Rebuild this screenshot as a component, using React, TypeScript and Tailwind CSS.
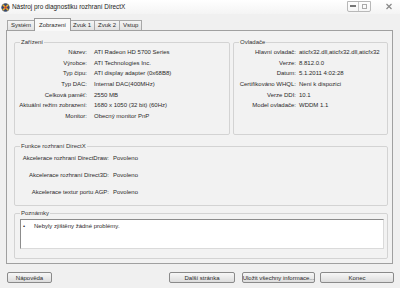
import type { ReactNode } from "react";

const device: [string, string][] = [
  ["Název:", "ATI Radeon HD 5700 Series"],
  ["Výrobce:", "ATI Technologies Inc."],
  ["Typ čipu:", "ATI display adapter (0x68B8)"],
  ["Typ DAC:", "Internal DAC(400MHz)"],
  ["Celková paměť:", "2550 MB"],
  ["Aktuální režim zobrazení:", "1680 x 1050 (32 bit) (60Hz)"],
  ["Monitor:", "Obecný monitor PnP"],
];

const drivers: [string, string][] = [
  ["Hlavní ovladač:", "aticfx32.dll,aticfx32.dll,aticfx32"],
  ["Verze:", "8.812.0.0"],
  ["Datum:", "5.1.2011 4:02:28"],
  ["Certifikováno WHQL:", "Není k dispozici"],
  ["Verze DDI:", "10.1"],
  ["Model ovladače:", "WDDM 1.1"],
];

const features: [string, string][] = [
  ["Akcelerace rozhraní DirectDraw:", "Povoleno"],
  ["Akcelerace rozhraní Direct3D:", "Povoleno"],
  ["Akcelerace textur portu AGP:", "Povoleno"],
];

const tabs = ["Systém", "Zobrazení", "Zvuk 1", "Zvuk 2", "Vstup"];

function Group({ title, className, children }: { title: string; className: string; children?: ReactNode }) {
  return (
    <fieldset className={`border border-[#d3d3d3] rounded-[2px] min-w-0 ${className}`}>
      <legend className="ml-[5px] px-[1px] leading-[8px] text-[#333]">{title}</legend>
      {children}
    </fieldset>
  );
}

function Btn({ label, w }: { label: string; w: string }) {
  return (
    <div
      className={`${w} h-[11px] flex items-center justify-center whitespace-nowrap border border-[#8a8a8a] rounded-[2px] bg-gradient-to-b from-[#f7f7f7] to-[#dddddd] leading-none`}
    >
      {label}
    </div>
  );
}

export default function App() {
  return (
    <div className="w-[400px] h-[288px] overflow-hidden bg-[#f0f0f0] text-[6px] text-[#2a2a2a] font-['Liberation_Sans',Arial,sans-serif]">
      {/* title bar */}
      <div className="h-[14px] flex items-center bg-gradient-to-b from-[#ffffff] to-[#f4f4f4] relative">
        <svg width="9" height="9" viewBox="0 0 10 10" className="ml-[1px]">
          <circle cx="5" cy="5" r="4.6" fill="#3a4a6a" />
          <path d="M2 2 L8 8 M8 2 L2 8" stroke="#e8b030" strokeWidth="1.8" />
          <circle cx="5" cy="5" r="1.3" fill="#d04030" />
        </svg>
        <span className="ml-[2px] text-[6.4px] text-[#222]">Nástroj pro diagnostiku rozhraní DirectX</span>
        <div className="ml-auto flex items-center h-[11px] mt-[-2px] border border-[#b8b8b8] rounded-b-[2px]">
          <div className="w-[11px] h-full flex items-center justify-center border-r border-[#c8c8c8]">
            <div className="w-[6px] h-[2px] border border-[#777]" />
          </div>
          <div className="w-[11px] h-full flex items-center justify-center">
            <div className="w-[5px] h-[5px] border border-[#aaa]" />
          </div>
        </div>
        <svg width="12" height="11" viewBox="0 0 12 11" className="ml-[12px] mr-[5px] mt-[-2px]">
          <path d="M3.5 3 L8.5 8 M8.5 3 L3.5 8" stroke="#888" strokeWidth="1.2" />
        </svg>
      </div>

      {/* tabs */}
      <div className="flex items-end pl-[7px] h-[12px] mt-[4px]">
        {tabs.map((t) =>
          t === "Zobrazení" ? (
            <div
              key={t}
              className="relative z-10 -mx-[1px] -mb-[1px] h-[13px] px-[4px] flex items-center bg-[#f8f8f8] border border-b-0 border-[#9a9a9a]"
            >
              {t}
            </div>
          ) : (
            <div
              key={t}
              className="h-[10px] px-[3px] flex items-center bg-gradient-to-b from-[#f4f4f4] to-[#e2e2e2] border border-b-0 border-[#a8a8a8] -ml-[1px] first:ml-0"
            >
              {t}
            </div>
          )
        )}
      </div>

      {/* tab panel */}
      <div className="ml-[6px] mr-[7px] h-[234px] border border-[#a0a0a0] bg-[#f2f2f2] pt-[7px] pl-[7px] pr-[4px]">
        <div className="flex gap-[3px] h-[97px]">
          <Group title="Zařízení" className="w-[216px] h-[97px]">
            <div className="pt-[1px] grid grid-cols-[72px_1fr] gap-x-[7px] leading-[10.67px]">
              {device.map(([k, v]) => (
                <div key={k} className="contents">
                  <div className="text-right whitespace-nowrap">{k}</div>
                  <div className="whitespace-nowrap">{v}</div>
                </div>
              ))}
            </div>
          </Group>
          <Group title="Ovladače" className="flex-1 h-[97px]">
            <div className="pt-[1px] grid grid-cols-[62px_1fr] gap-x-[3px] leading-[10.67px]">
              {drivers.map(([k, v]) => (
                <div key={k} className="contents">
                  <div className="text-right whitespace-nowrap">{k}</div>
                  <div className="whitespace-nowrap">{v}</div>
                </div>
              ))}
            </div>
          </Group>
        </div>

        <Group title="Funkce rozhraní DirectX" className="mt-[7px] h-[64px]">
          <div className="grid grid-cols-[94px_1fr] gap-x-[4px] leading-[17px]">
            {features.map(([k, v]) => (
              <div key={k} className="contents">
                <div className="text-right whitespace-nowrap">{k}</div>
                <div>{v}</div>
              </div>
            ))}
          </div>
        </Group>

        <Group title="Poznámky" className="mt-[3px] h-[50px]">
          <div className="mt-[2px] ml-[5px] mr-[3px] h-[30px] bg-white border border-[#8c8c8c] border-r-[#dadada] border-b-[#dadada] flex items-start pt-[3px] leading-[7px]">
            <span className="ml-[2px] w-[11px]">•</span>
            <span>Nebyly zjištěny žádné problémy.</span>
          </div>
        </Group>
      </div>

      {/* buttons */}
      <div className="flex mt-[8px] pl-[7px] pr-[6px]">
        <Btn label="Nápověda" w="w-[45px]" />
        <div className="ml-auto flex">
          <Btn label="Další stránka" w="w-[66px]" />
          <div className="w-[7px]" />
          <Btn label="Uložit všechny informace..." w="w-[73px]" />
          <div className="w-[5px]" />
          <Btn label="Konec" w="w-[74px]" />
        </div>
      </div>
    </div>
  );
}
